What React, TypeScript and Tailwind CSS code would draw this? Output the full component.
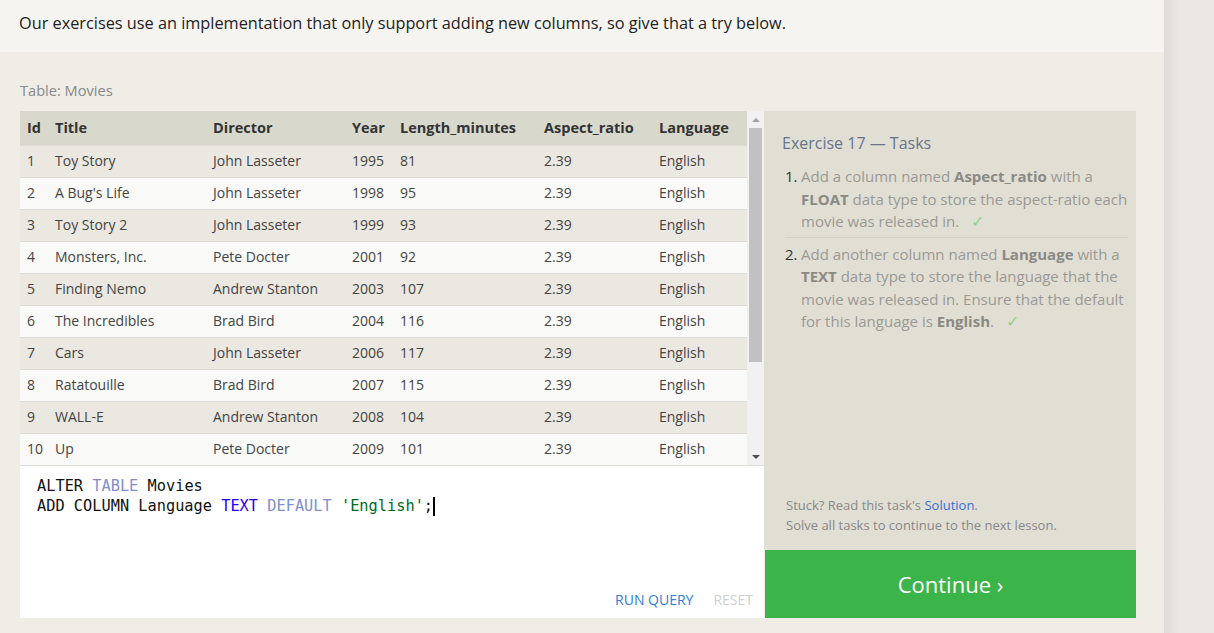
import React from "react";

const movies = [
  [1, "Toy Story", "John Lasseter", 1995, 81],
  [2, "A Bug's Life", "John Lasseter", 1998, 95],
  [3, "Toy Story 2", "John Lasseter", 1999, 93],
  [4, "Monsters, Inc.", "Pete Docter", 2001, 92],
  [5, "Finding Nemo", "Andrew Stanton", 2003, 107],
  [6, "The Incredibles", "Brad Bird", 2004, 116],
  [7, "Cars", "John Lasseter", 2006, 117],
  [8, "Ratatouille", "Brad Bird", 2007, 115],
  [9, "WALL-E", "Andrew Stanton", 2008, 104],
  [10, "Up", "Pete Docter", 2009, 101],
];

const cols = "grid grid-cols-[28px_158px_139px_48px_144px_115px_88px] pl-[7px] items-center";

export default function App() {
  return (
    <div className="w-[1214px] h-[633px] overflow-hidden flex font-['Open_Sans','Noto_Sans',sans-serif] bg-[#ebe7e4]">
      <div className="w-[1164px] flex flex-col">
        {/* intro text */}
        <div className="h-[52px] bg-[#f5f4f0] px-[19px] pt-[11px] text-[16.3px] text-[#222]">
          Our exercises use an implementation that only support adding new columns, so give that a try below.
        </div>

        <div className="flex-1 bg-[#efede6] px-[20px] pt-[28px]">
          <div className="text-[14.6px] text-[#888] h-[31px]">Table: Movies</div>

          <div className="flex w-[1116px]">
            {/* left: table + editor */}
            <div className="w-[744px] flex flex-col">
              <div className="flex h-[354px]">
                <div className="w-[727px] text-[14px] text-[#444]">
                  <div className={`${cols} h-[34px] bg-[#d9d8cc] font-bold text-[14.5px] text-[#333]`}>
                    <span>Id</span>
                    <span>Title</span>
                    <span>Director</span>
                    <span>Year</span>
                    <span>Length_minutes</span>
                    <span>Aspect_ratio</span>
                    <span>Language</span>
                  </div>
                  {movies.map((m, i) => (
                    <div
                      key={m[0]}
                      className={`${cols} h-[32px] pb-[2px] border-t border-[#dddcd6] ${i % 2 === 0 ? "bg-[#eae8e0]" : "bg-[#f9f9f8]"}`}
                    >
                      <span>{m[0]}</span>
                      <span>{m[1]}</span>
                      <span>{m[2]}</span>
                      <span>{m[3]}</span>
                      <span>{m[4]}</span>
                      <span>2.39</span>
                      <span>English</span>
                    </div>
                  ))}
                </div>
                {/* scrollbar */}
                <div className="w-[17px] bg-[#f1f1f1] flex flex-col items-center">
                  <div className="h-[17px] flex items-center justify-center">
                    <div className="w-0 h-0 border-l-[4px] border-r-[4px] border-b-[4px] border-l-transparent border-r-transparent border-b-[#a3a3a3]" />
                  </div>
                  <div className="w-[13px] h-[234px] bg-[#c1c1c1]" />
                  <div className="flex-1" />
                  <div className="h-[17px] flex items-center justify-center">
                    <div className="w-0 h-0 border-l-[4px] border-r-[4px] border-t-[4px] border-l-transparent border-r-transparent border-t-[#505050]" />
                  </div>
                </div>
              </div>

              {/* editor */}
              <div className="h-[153px] bg-white border-t border-[#dddcd6] flex flex-col">
                <div className="pl-[17px] pt-[10px] font-['DejaVu_Sans_Mono',monospace] text-[15.3px] leading-[20px] text-[#111]">
                  <div>
                    ALTER <span className="text-[#7f8fd0]">TABLE</span> Movies
                  </div>
                  <div className="flex items-center">
                    <span>
                      ADD COLUMN Language <span className="text-[#2200ff]">TEXT</span>{" "}
                      <span className="text-[#7f8fd0]">DEFAULT</span>{" "}
                      <span className="text-[#006b1d]">'English'</span>;
                    </span>
                    <span className="inline-block w-[2px] h-[19px] bg-black" />
                  </div>
                </div>
                <div className="flex-1" />
                <div className="flex justify-end gap-[20px] pr-[11px] pb-[8px] text-[14px]">
                  <span className="text-[#2f7ddc]">RUN QUERY</span>
                  <span className="text-[#cfcfcf]">RESET</span>
                </div>
              </div>
            </div>

            {/* right: tasks */}
            <div className="w-[372px] flex flex-col">
              <div className="h-[439px] bg-[#e1dfd4] flex flex-col pl-[18px] pr-[8px] pt-[20px]">
                <div className="text-[16px] text-[#66758c] h-[34px]">Exercise 17 — Tasks</div>
                <ol className="text-[15px] leading-[22.5px] text-[#9a9994]">
                  <li className="flex pb-[4px] border-b border-[#d3d1c6] ml-[3px]">
                    <span className="w-[16px] shrink-0 text-[#333]">1.</span>
                    <p>
                      Add a column named <b className="text-[#8a8984]">Aspect_ratio</b> with a{" "}
                      <b className="text-[#8a8984]">FLOAT</b> data type to store the aspect-ratio each movie was released
                      in.<span className="text-[#8fcf8f] ml-[12px] text-[16px]">✓</span>
                    </p>
                  </li>
                  <li className="flex pt-[5px] ml-[3px]">
                    <span className="w-[16px] shrink-0 text-[#333]">2.</span>
                    <p>
                      Add another column named <b className="text-[#8a8984]">Language</b> with a{" "}
                      <b className="text-[#8a8984]">TEXT</b> data type to store the language that the movie was released
                      in. Ensure that the default for this language is <b className="text-[#8a8984]">English</b>.
                      <span className="text-[#8fcf8f] ml-[12px] text-[16px]">✓</span>
                    </p>
                  </li>
                </ol>
                <div className="flex-1" />
                <div className="text-[13px] leading-[20px] text-[#888] pl-[4px] pb-[15px]">
                  <div>
                    Stuck? Read this task's <span className="text-[#3a6fd0]">Solution</span>.
                  </div>
                  <div>Solve all tasks to continue to the next lesson.</div>
                </div>
              </div>
              <div className="h-[68px] bg-[#3bb54a] ml-[1px] flex items-center justify-center text-white text-[22px]">
                Continue ›
              </div>
            </div>
          </div>
        </div>
      </div>
      <div className="flex-1 bg-gradient-to-r from-[#dfdbd8] to-[#ebe7e4] to-[30%]" />
    </div>
  );
}
